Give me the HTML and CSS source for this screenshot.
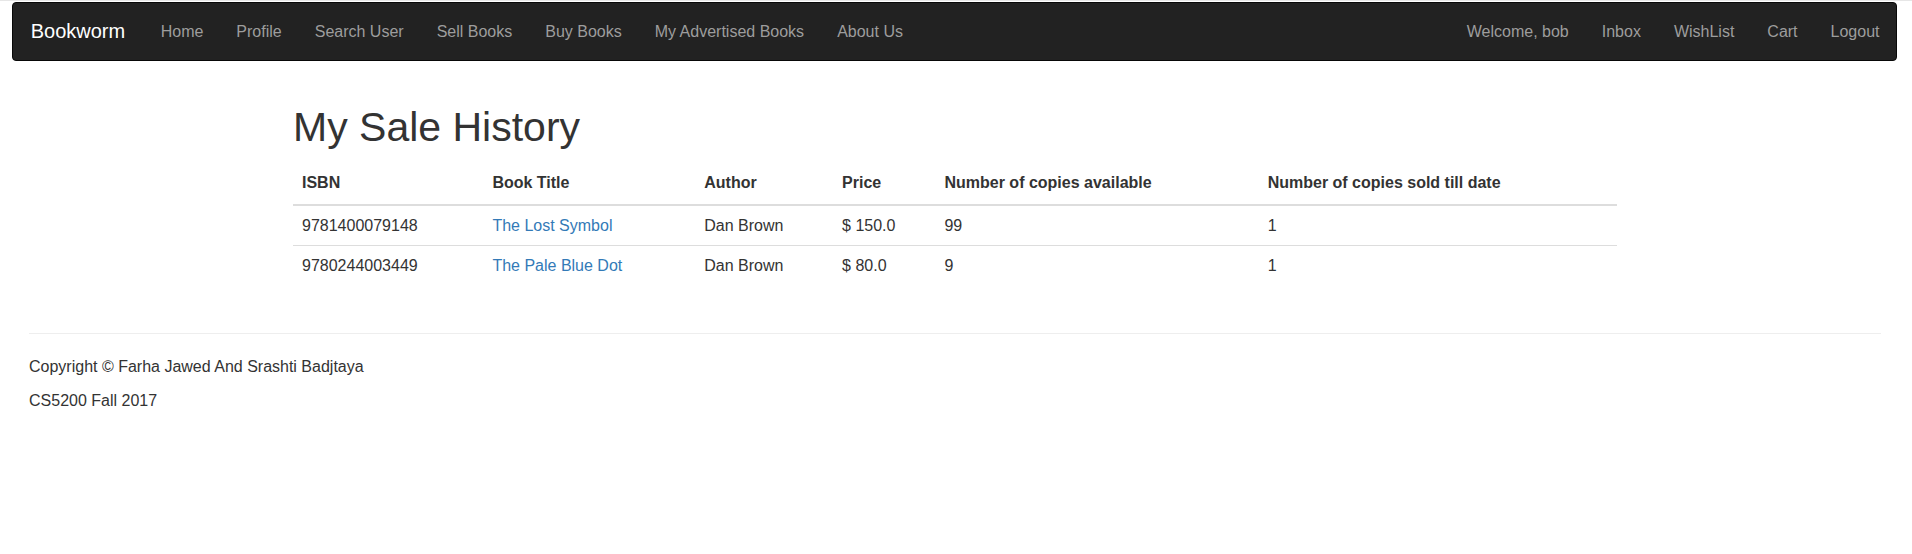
FILE: index.html
```html
<!DOCTYPE html>
<html lang="en">
<head>
<meta charset="utf-8">
<title>My Sale History</title>
<link rel="stylesheet" href="styles.css">
</head>
<body>
<div class="topline"></div>
<nav class="navbar">
  <a class="brand" href="#">Bookworm</a>
  <ul class="nav">
    <li><a href="#">Home</a></li>
    <li><a href="#">Profile</a></li>
    <li><a href="#">Search User</a></li>
    <li><a href="#">Sell Books</a></li>
    <li><a href="#">Buy Books</a></li>
    <li><a href="#">My Advertised Books</a></li>
    <li><a href="#">About Us</a></li>
  </ul>
  <ul class="nav nav-right">
    <li><a href="#">Welcome, bob</a></li>
    <li><a href="#">Inbox</a></li>
    <li><a href="#">WishList</a></li>
    <li><a href="#">Cart</a></li>
    <li><a href="#">Logout</a></li>
  </ul>
</nav>

<main class="content">
  <h1 class="title">My Sale History</h1>
  <table class="table">
    <colgroup>
      <col class="c-isbn">
      <col class="c-title">
      <col class="c-author">
      <col class="c-price">
      <col class="c-avail">
      <col class="c-sold">
    </colgroup>
    <thead>
      <tr>
        <th>ISBN</th>
        <th>Book Title</th>
        <th>Author</th>
        <th>Price</th>
        <th>Number of copies available</th>
        <th>Number of copies sold till date</th>
      </tr>
    </thead>
    <tbody>
      <tr>
        <td>9781400079148</td>
        <td><a href="#">The Lost Symbol</a></td>
        <td>Dan Brown</td>
        <td>$ 150.0</td>
        <td>99</td>
        <td>1</td>
      </tr>
      <tr>
        <td>9780244003449</td>
        <td><a href="#">The Pale Blue Dot</a></td>
        <td>Dan Brown</td>
        <td>$ 80.0</td>
        <td>9</td>
        <td>1</td>
      </tr>
    </tbody>
  </table>
</main>

<footer class="footer">
  <hr class="rule">
  <p>Copyright &copy; Farha Jawed And Srashti Badjtaya</p>
  <p>CS5200 Fall 2017</p>
</footer>
</body>
</html>
```

FILE: styles.css
```css
* {
  box-sizing: border-box;
}

html, body {
  margin: 0;
  padding: 0;
  background: #fff;
}

body {
  font-family: "Liberation Sans", Arial, Helvetica, sans-serif;
  font-size: 16px;
  line-height: 23px;
  color: #333;
}

a {
  text-decoration: none;
}

.topline {
  height: 1px;
  background: #e6e6e6;
}

.navbar {
  display: flex;
  align-items: stretch;
  margin: 1px 15px 0 12px;
  height: 59px;
  background: #222;
  border: 1px solid #080808;
  border-radius: 4px;
}

.brand {
  display: block;
  padding: 17px 19px 17px 17.7px;
  font-size: 20px;
  line-height: 23px;
  color: #fff;
}

.nav {
  display: flex;
  list-style: none;
  margin: 0;
  padding: 0;
}

.nav-right {
  margin-left: auto;
}

.nav a {
  display: block;
  padding: 17px 16.5px;
  line-height: 23px;
  color: #9d9d9d;
}

.content {
  margin: 0 0 0 293px;
  width: 1324px;
}

.title {
  margin: 44px 0 12px;
  font-size: 41px;
  line-height: 45px;
  font-weight: 500;
  color: #333;
}

.table {
  width: 100%;
  table-layout: fixed;
  border-collapse: collapse;
  border-spacing: 0;
}

.c-isbn { width: 190.4px; }
.c-title { width: 211.9px; }
.c-author { width: 137.8px; }
.c-price { width: 102.4px; }
.c-avail { width: 323.2px; }
.c-sold { width: 358.3px; }

.table th {
  text-align: left;
  font-weight: bold;
  padding: 9px 9px;
  line-height: 24px;
  border-bottom: 2px solid #ddd;
  white-space: nowrap;
}

.table td {
  padding: 8px 9px;
  line-height: 23px;
}

.table tbody tr + tr td {
  border-top: 1px solid #ddd;
}

.table td a {
  color: #337ab7;
}

.footer {
  margin: 48px 31px 0 29px;
}

.rule {
  margin: 0 0 21.8px;
  border: 0;
  border-top: 1px solid #eee;
  height: 0;
}

.footer p {
  margin: 0 0 11.3px;
  line-height: 22.8px;
}
```
